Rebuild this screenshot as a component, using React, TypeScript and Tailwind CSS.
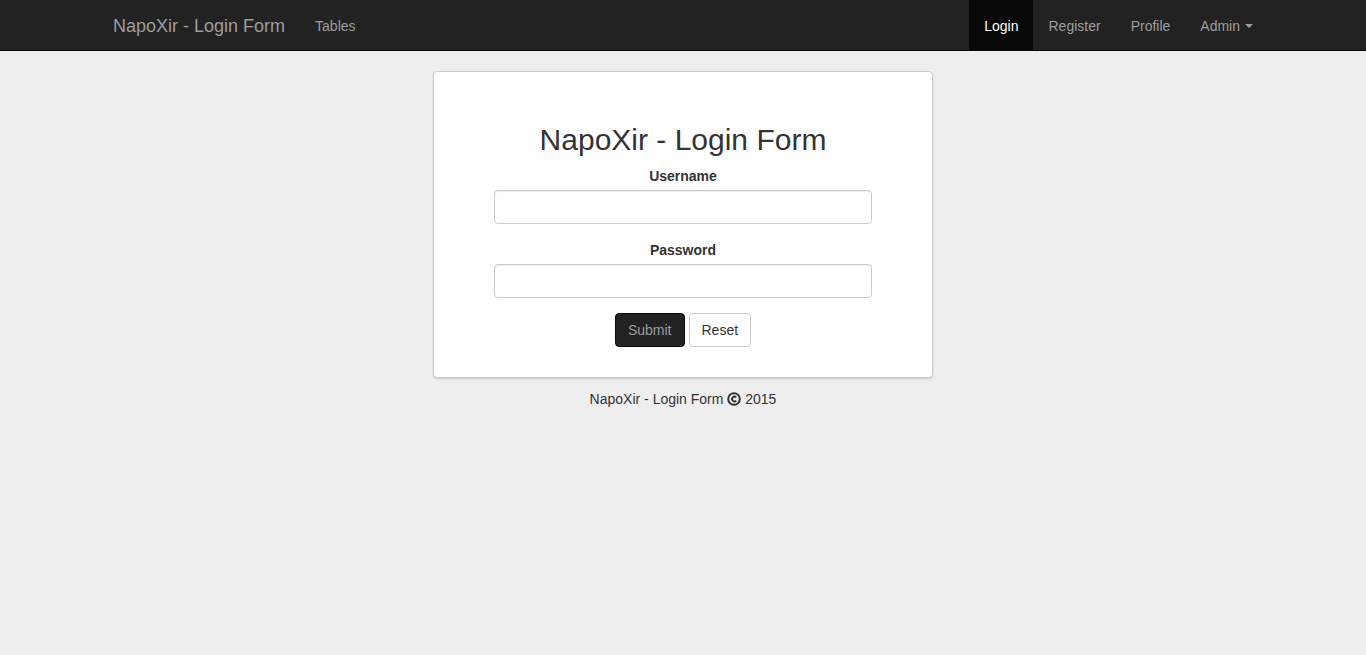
import React from "react";

function Copyright() {
  return (
    <svg width="14" height="14" viewBox="0 0 14 14" className="inline-block align-[-2px]">
      <circle cx="7" cy="7" r="5.8" fill="none" stroke="#333" strokeWidth="2" />
      <path d="M9.2 5.3 A2.4 2.4 0 1 0 9.2 8.7" fill="none" stroke="#333" strokeWidth="1.9" />
    </svg>
  );
}

export default function App() {
  return (
    <div className="min-h-[655px] bg-[#eeeeee] text-[#333] text-[14px] leading-[20px]" style={{ fontFamily: '"Liberation Sans", Arial, sans-serif' }}>
      <nav className="bg-[#222222] border-b border-[#080808] h-[51px]">
        <div className="w-[1170px] mx-auto px-[15px] flex justify-between h-[50px]">
          <div className="flex h-[50px]">
            <a className="-ml-[15px] px-[15px] pt-[16px] pb-[14px] text-[18px] leading-[20px] text-[#9d9d9d]">NapoXir - Login Form</a>
            <a className="px-[15px] pt-[16px] pb-[14px] text-[#9d9d9d]">Tables</a>
          </div>
          <div className="flex h-[50px] -mr-[15px]">
            <a className="px-[15px] pt-[16px] pb-[14px] bg-[#080808] text-white">Login</a>
            <a className="px-[15px] pt-[16px] pb-[14px] text-[#9d9d9d]">Register</a>
            <a className="px-[15px] pt-[16px] pb-[14px] text-[#9d9d9d]">Profile</a>
            <a className="px-[15px] pt-[16px] pb-[14px] text-[#9d9d9d] flex items-center">
              Admin
              <span className="ml-[5px] w-0 h-0 border-x-[4px] border-x-transparent border-t-[4px] border-t-[#9d9d9d]" />
            </a>
          </div>
        </div>
      </nav>
      <div className="mt-[20px] flex flex-col items-center">
        <div className="w-[500px] bg-white border border-[#cccccc] rounded-[4px] shadow-[0_1px_2px_rgba(0,0,0,0.15)] px-[60px] pt-[31px] pb-[30px] text-center">
          <h2 className="mt-[20px] mb-[10px] text-[30px] leading-[33px] font-normal text-[#333]">NapoXir - Login Form</h2>
          <div className="mb-[16px]">
            <label className="block font-bold mb-[4px]">Username</label>
            <input type="text" className="block w-full h-[34px] border border-[#cccccc] rounded-[4px] bg-white shadow-[inset_0_1px_1px_rgba(0,0,0,0.075)] px-3 outline-none" />
          </div>
          <div className="mb-[15px]">
            <label className="block font-bold mb-[4px]">Password</label>
            <input type="password" className="block w-full h-[34px] border border-[#cccccc] rounded-[4px] bg-white shadow-[inset_0_1px_1px_rgba(0,0,0,0.075)] px-3 outline-none" />
          </div>
          <div className="flex justify-center gap-[4px]">
            <button className="h-[34px] px-[12px] bg-[#222222] border border-[#080808] rounded-[4px] text-[#9d9d9d]">Submit</button>
            <button className="h-[34px] px-[12px] bg-white border border-[#cccccc] rounded-[4px] text-[#333]">Reset</button>
          </div>
        </div>
        <p className="mt-[11px] text-center">
          NapoXir - Login Form <Copyright /> 2015
        </p>
      </div>
    </div>
  );
}
